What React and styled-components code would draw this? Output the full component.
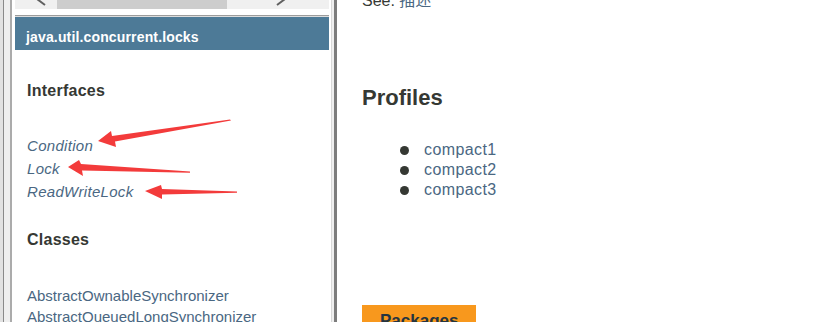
import * as React from 'react';
import styled, { createGlobalStyle } from 'styled-components';

const GlobalStyle = createGlobalStyle`
  html, body {
    margin: 0;
    padding: 0;
    background: #fff;
  }

  body {
    font-family: "Liberation Sans", Arial, "Noto Sans CJK SC", sans-serif;
    color: #353833;
  }
`;

const Page = styled.div`
  position: relative;
  display: flex;
  width: 833px;
  height: 322px;
  overflow: hidden;
  background: #fff;
`;

const Sidebar = styled.div`
  display: flex;
  flex: none;
  width: 337px;
  box-sizing: border-box;
  border-left: 3px solid #e2e2e2;
`;

const Pane = styled.div`
  display: flex;
  flex: 1;
  padding: 0 2px 0 6px;
  border-left: 1px solid #8a8a8a;
  border-right: 3px solid #7c7c7c;
  background: #efefef;
`;

const Inner = styled.div`
  flex: 1;
  min-width: 0;
  overflow: hidden;
  padding: 0 2px 0 3px;
  border-left: 2px solid #ababab;
  border-right: 1px solid #d8d8d8;
  background: #fff;
`;

const Scrollbar = styled.div`
  display: grid;
  grid-template-columns: 42px 170px 1fr;
  height: 9px;
  background: #f0f0f0;
  overflow: hidden;

  svg {
    display: block;
  }
`;

const Thumb = styled.div`
  background: #cdcdcd;
`;

const Divider = styled.div`
  margin-top: 6px;
  height: 1px;
  border-top: 1px solid #9c9c9c;
  background: #dcdcdc;
`;

const Header = styled.div`
  height: 33px;
  box-sizing: border-box;
  padding: 12px 0 0 11px;
  background: #4d7a97;
  color: #fff;
  font-size: 14px;
  font-weight: bold;
  line-height: 16px;
  letter-spacing: 0.15px;
`;

const Body = styled.div`
  padding-left: 12px;
`;

const SideHeading = styled.div`
  margin-top: ${p => p.$gap}px;
  font-size: 16px;
  font-weight: bold;
  line-height: 20px;
  letter-spacing: 0.25px;
  color: #353833;
`;

const LinkList = styled.div`
  display: flex;
  flex-direction: column;
  margin-top: ${p => p.$gap}px;
  font-size: 15px;
  line-height: ${p => p.$line}px;
  font-style: ${p => (p.$italic ? 'italic' : 'normal')};
  color: #4a6782;
  letter-spacing: ${p => (p.$italic ? '0.3px' : '0')};
  white-space: nowrap;
`;

const Main = styled.div`
  display: flex;
  flex-direction: column;
  flex: 1;
  padding-left: 25px;
`;

const SeeLine = styled.div`
  flex: none;
  margin-top: -9px;
  font-size: 16px;
  line-height: 20px;
  color: #353833;

  a {
    color: #4a6782;
    text-decoration: none;
  }
`;

const Title = styled.div`
  flex: none;
  margin-top: 73px;
  font-size: 22px;
  font-weight: bold;
  line-height: 28px;
  color: #353833;
`;

const ProfileList = styled.div`
  display: flex;
  flex: none;
  flex-direction: column;
  margin-top: 28px;
`;

const ProfileItem = styled.div`
  display: flex;
  align-items: center;
  height: 20px;
  font-size: 16px;
  color: #4a6782;
  letter-spacing: 0.4px;
`;

const Bullet = styled.span`
  width: 9px;
  height: 9px;
  margin: 0 15px 0 38px;
  border-radius: 50%;
  background: #353833;
`;

const NavTab = styled.div`
  flex: none;
  align-self: flex-start;
  margin-top: 105px;
  padding: 5px 18px 0;
  background: #f8981d;
  color: #253441;
  font-size: 17px;
  font-weight: bold;
  line-height: 22px;
`;

const Overlay = styled.svg`
  position: absolute;
  inset: 0;
  pointer-events: none;
`;

const arrows = [
  '98,141 111,131 112,136 230,119.5 231,120.5 115,141.5 116,147',
  '68,167 79,160 81,164 190,171.6 190,172.8 82,170.5 83,176',
  '145,191 161,185 162,189 237,191.6 237,192.8 162,194.5 162,199'
];

export default function App() {
  return (
    <>
      <GlobalStyle />
      <Page>
        <Sidebar>
          <Pane>
            <Inner>
              <Scrollbar>
                <svg width="42" height="9">
                  <polyline points="22,-1 30,5" fill="none" stroke="#606060" strokeWidth="2" />
                </svg>
                <Thumb />
                <svg width="102" height="9">
                  <polyline points="58,-1 50,5" fill="none" stroke="#606060" strokeWidth="2" />
                </svg>
              </Scrollbar>
              <Divider />
              <Header>java.util.concurrent.locks</Header>
              <Body>
                <SideHeading $gap={31}>Interfaces</SideHeading>
                <LinkList $gap={33} $line={23} $italic>
                  <span>Condition</span>
                  <span>Lock</span>
                  <span>ReadWriteLock</span>
                </LinkList>
                <SideHeading $gap={27}>Classes</SideHeading>
                <LinkList $gap={35} $line={21}>
                  <span>AbstractOwnableSynchronizer</span>
                  <span>AbstractQueuedLongSynchronizer</span>
                </LinkList>
              </Body>
            </Inner>
          </Pane>
        </Sidebar>
        <Main>
          <SeeLine>
            See: <a href="#desc">描述</a>
          </SeeLine>
          <Title>Profiles</Title>
          <ProfileList>
            {['compact1', 'compact2', 'compact3'].map(name => (
              <ProfileItem key={name}>
                <Bullet />
                {name}
              </ProfileItem>
            ))}
          </ProfileList>
          <NavTab>Packages</NavTab>
        </Main>
        <Overlay width="833" height="322" viewBox="0 0 833 322">
          {arrows.map(points => (
            <polygon key={points} points={points} fill="#f33b3b" />
          ))}
        </Overlay>
      </Page>
    </>
  );
}
